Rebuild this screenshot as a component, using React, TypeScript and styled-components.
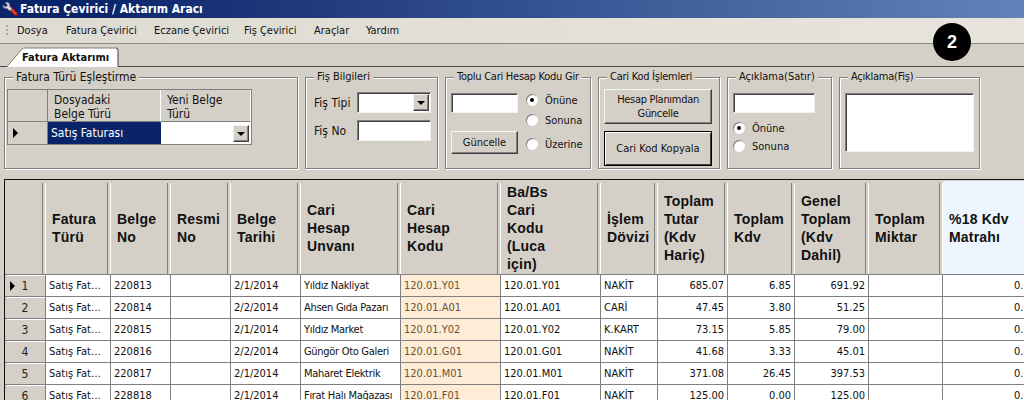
import React from "react";
import styled, { createGlobalStyle } from "styled-components";

const GlobalStyle = createGlobalStyle`
  html, body {
    margin: 0;
    padding: 0;
    width: 1024px;
    height: 400px;
    overflow: hidden;
    background: #d4d0c8;
  }
  * { box-sizing: border-box; }
`;

const UI_FONT = `"DejaVu Sans Condensed", "DejaVu Sans", sans-serif`;

const Page = styled.div`
  position: relative;
  width: 1024px;
  height: 400px;
  overflow: hidden;
  display: flex;
  flex-direction: column;
  background: #d4d0c8;
  color: #111;
  font-family: ${UI_FONT};
  font-stretch: condensed;
  font-size: 11px;
`;

const TitleBar = styled.div`
  height: 18px;
  flex: none;
  display: flex;
  align-items: center;
  gap: 2px;
  padding-left: 2px;
  background: linear-gradient(90deg, #0a246a 0%, #0a246a 8%, #6283b9 100%);
  color: #fff;
  font-size: 12px;
  font-weight: bold;
`;

const MenuBar = styled.div`
  height: 26px;
  flex: none;
  display: grid;
  grid-template-columns: 12px 49px 88px 90px 70px 52px 60px;
  align-items: center;
  padding-left: 5px;
  background: linear-gradient(90deg, #dedbd2 0%, #e6e4dd 100%);
  border-bottom: 1px solid #8a8a86;
`;

const Grip = styled.div`
  width: 2px;
  height: 11px;
  margin-left: 1px;
  background: repeating-linear-gradient(180deg, #a8a59c 0 2px, transparent 2px 4px);
`;

const MenuItem = styled.span`
  white-space: nowrap;
`;

const TabStrip = styled.div`
  height: 23px;
  flex: none;
  padding: 3px 0 0 7px;
  border-bottom: 1px solid #4a4a48;
`;

const Tab = styled.div`
  position: relative;
  width: 112px;
  height: 20px;
  display: flex;
  align-items: center;
  padding-left: 15px;
  font-weight: bold;
`;

const TabShape = styled.svg`
  position: absolute;
  left: 0;
  top: 0;
`;

const TabLabel = styled.span`
  position: relative;
`;

const GroupRow = styled.div`
  flex: none;
  display: flex;
  gap: 7px;
  padding: 10px 0 0 4px;
`;

const Group = styled.div<{ $w: number }>`
  position: relative;
  width: ${(p) => p.$w}px;
  height: 92px;
  flex: none;
  border: 1px solid #808080;
  box-shadow: inset 1px 1px 0 #fff, 1px 1px 0 #fff;
`;

const GroupTitle = styled.span<{ $large?: boolean; $tight?: boolean }>`
  position: absolute;
  left: 8px;
  top: -8px;
  padding: 0 3px;
  line-height: 14px;
  white-space: nowrap;
  background: #d4d0c8;
  font-size: ${(p) => (p.$large ? "12px" : "11px")};
  letter-spacing: ${(p) => (p.$tight ? "-0.25px" : "0")};
`;

const MiniGrid = styled.div`
  display: grid;
  grid-template-columns: 40px 113px 90px;
  grid-template-rows: 32px 22px;
  width: 245px;
  margin: 11px 0 0 2px;
  border: 1px solid #808080;
  font-size: 12px;
`;

const MiniHead = styled.div`
  padding: 3px 0 0 6px;
  line-height: 14px;
  border-right: 1px solid #fff;
  border-bottom: 1px solid #808080;
  white-space: pre-line;
`;

const MiniCorner = styled(MiniHead)`
  border-right: 1px solid #808080;
`;

const MiniArrow = styled.div`
  display: flex;
  align-items: center;
  padding-left: 5px;
  border-right: 1px solid #808080;
`;

const Arrow = styled.i`
  display: block;
  width: 0;
  height: 0;
  border-left: 5px solid #000;
  border-top: 5px solid transparent;
  border-bottom: 5px solid transparent;
`;

const SelectedCell = styled.div`
  display: flex;
  align-items: center;
  padding-left: 3px;
  background: #0a246a;
  color: #fff;
`;

const ComboCell = styled.div`
  display: flex;
  align-items: center;
  justify-content: flex-end;
  padding-right: 2px;
  background: #fff;
`;

const ComboButton = styled.div`
  position: relative;
  width: 16px;
  height: 17px;
  background: #d4d0c8;
  border: 1px solid;
  border-color: #f4f2ec #404040 #404040 #f4f2ec;
  box-shadow: inset -1px -1px 0 #808080;
  &::after {
    content: "";
    position: absolute;
    left: 3px;
    top: 6px;
    border-top: 4px solid #000;
    border-left: 4px solid transparent;
    border-right: 4px solid transparent;
  }
`;

const FisForm = styled.div`
  display: grid;
  grid-template-columns: 43px 74px;
  grid-auto-rows: 21px;
  row-gap: 7px;
  align-items: center;
  padding: 14px 0 0 8px;
  font-size: 12px;
`;

const Sunken = styled.div<{ $w?: number; $h?: number }>`
  width: ${(p) => (p.$w ? `${p.$w}px` : "100%")};
  height: ${(p) => (p.$h ? `${p.$h}px` : "100%")};
  flex: none;
  display: flex;
  align-items: center;
  justify-content: flex-end;
  padding-right: 1px;
  background: #fff;
  border: 1px solid;
  border-color: #808080 #f4f2ec #f4f2ec #808080;
  box-shadow: inset 1px 1px 0 #404040;
`;

const TopluBody = styled.div`
  display: flex;
  gap: 8px;
  padding: 15px 0 0 5px;
`;

const TopluLeft = styled.div`
  width: 67px;
  display: flex;
  flex-direction: column;
  gap: 18px;
`;

const Button = styled.div<{ $h: number; $default?: boolean; $tight?: boolean }>`
  height: ${(p) => p.$h}px;
  display: flex;
  align-items: center;
  justify-content: center;
  text-align: center;
  line-height: 14px;
  white-space: pre-line;
  letter-spacing: ${(p) => (p.$tight ? "-0.3px" : "0")};
  background: #d4d0c8;
  border: 1px solid;
  border-color: ${(p) => (p.$default ? "#000" : "#f4f2ec #404040 #404040 #f4f2ec")};
  box-shadow: ${(p) =>
    p.$default
      ? "inset 1px 1px 0 #fff, inset -1px -1px 0 #404040"
      : "inset -1px -1px 0 #808080"};
`;

const RadioColumn = styled.div<{ $gap?: number }>`
  display: flex;
  flex-direction: column;
  gap: ${(p) => p.$gap ?? 6}px;
`;

const RadioRow = styled.div<{ $push?: number }>`
  height: 14px;
  display: flex;
  align-items: center;
  gap: 7px;
  margin-top: ${(p) => p.$push ?? 0}px;
`;

const RadioDot = styled.span<{ $on?: boolean }>`
  position: relative;
  width: 12px;
  height: 12px;
  flex: none;
  border-radius: 50%;
  background: #fff;
  box-shadow: inset 1px 1px 0 #808080;
  &::after {
    content: "";
    display: ${(p) => (p.$on ? "block" : "none")};
    position: absolute;
    left: 4px;
    top: 4px;
    width: 4px;
    height: 4px;
    border-radius: 50%;
    background: #000;
  }
`;

const ButtonStack = styled.div`
  display: flex;
  flex-direction: column;
  gap: 7px;
  width: 108px;
  margin: 11px 0 0 5px;
`;

const AciklamaBody = styled.div`
  display: flex;
  flex-direction: column;
  gap: 8px;
  padding: 15px 0 0 5px;
`;

const DataGrid = styled.div`
  flex: none;
  margin: 10px 0 0 4px;
  height: 230px;
  border-top: 1px solid #111;
  border-left: 1px solid #111;
  overflow: hidden;
`;

const Table = styled.table`
  table-layout: fixed;
  width: 1035px;
  border-collapse: separate;
  border-spacing: 0;
  margin-top: 1px;
`;

const Col = styled.col<{ $w: number }>`
  width: ${(p) => p.$w}px;
`;

const HeadCell = styled.th<{ $blue?: boolean }>`
  position: relative;
  height: 94px;
  padding: 0 0 0 6px;
  text-align: left;
  vertical-align: middle;
  white-space: pre-line;
  font: bold 14px/18px "Liberation Sans", Arial, sans-serif;
  letter-spacing: 0.2px;
  color: #111;
  background: ${(p) => (p.$blue ? "#edf6ff" : "#d4d0c8")};
  border-bottom: 1px solid #808080;
  &::after {
    content: "";
    position: absolute;
    right: 0;
    top: 2px;
    bottom: 0;
    width: 2px;
    border-left: 1px solid #808080;
    border-right: 1px solid #fff;
  }
`;

const RowHead = styled.td`
  height: 22px;
  padding: 0;
  background: #d4d0c8;
  border-right: 1px solid #808080;
  border-bottom: 1px solid #808080;
  box-shadow: inset 2px 0 0 #d4d0c8, inset 0 1px 0 #fff;
`;

const RowHeadInner = styled.div`
  position: relative;
  text-align: center;
  font-size: 12px;
  color: #222;
`;

const RowArrow = styled(Arrow)`
  position: absolute;
  left: 5px;
  top: 2px;
`;

const Cell = styled.td<{ $num?: boolean; $code?: boolean; $tight?: boolean }>`
  height: 22px;
  padding: 0 3px;
  overflow: hidden;
  white-space: nowrap;
  text-align: ${(p) => (p.$num ? "right" : "left")};
  letter-spacing: ${(p) => (p.$tight ? "-0.3px" : "0")};
  background: ${(p) => (p.$code ? "#feecd7" : "#fff")};
  color: ${(p) => (p.$code ? "#6b5230" : "#111")};
  border-right: 1px solid #808080;
  border-bottom: 1px solid #808080;
`;

const Badge = styled.div`
  position: absolute;
  left: 933px;
  top: 23px;
  width: 38px;
  height: 38px;
  border-radius: 50%;
  display: flex;
  align-items: center;
  justify-content: center;
  background: #000;
  color: #fff;
  font: bold 18px "Liberation Sans", Arial, sans-serif;
`;

const widths = [41, 65, 60, 60, 70, 100, 100, 100, 57, 70, 67, 74, 74, 97];

const headers = [
  "",
  "Fatura\nTürü",
  "Belge\nNo",
  "Resmi\nNo",
  "Belge\nTarihi",
  "Cari\nHesap\nUnvanı",
  "Cari\nHesap\nKodu",
  "Ba/Bs\nCari\nKodu\n(Luca\niçin)",
  "İşlem\nDövizi",
  "Toplam\nTutar\n(Kdv\nHariç)",
  "Toplam\nKdv",
  "Genel\nToplam\n(Kdv\nDahil)",
  "Toplam\nMiktar",
  "%18 Kdv\nMatrahı",
];

const rows = [
  ["220813", "2/1/2014", "Yıldız Nakliyat", "120.01.Y01", "NAKİT", "685.07", "6.85", "691.92"],
  ["220814", "2/2/2014", "Ahsen Gıda Pazarı", "120.01.A01", "CARİ", "47.45", "3.80", "51.25"],
  ["220815", "2/1/2014", "Yıldız Market", "120.01.Y02", "K.KART", "73.15", "5.85", "79.00"],
  ["220816", "2/2/2014", "Güngör Oto Galeri", "120.01.G01", "NAKİT", "41.68", "3.33", "45.01"],
  ["220817", "2/1/2014", "Maharet Elektrik", "120.01.M01", "NAKİT", "371.08", "26.45", "397.53"],
  ["228818", "2/1/2014", "Fırat Halı Mağazası", "120.01.F01", "NAKİT", "125.00", "0.00", "125.00"],
];

const menus = ["Dosya", "Fatura Çevirici", "Eczane Çevirici", "Fiş Çevirici", "Araçlar", "Yardım"];

function ToolIcon() {
  return (
    <svg width="16" height="16" viewBox="0 0 16 16">
      <path d="M7 6 L14 13" stroke="#8c1a12" strokeWidth="4" strokeLinecap="round" />
      <path d="M7.5 6.5 L13.5 12.5" stroke="#e8483a" strokeWidth="2" strokeLinecap="round" />
      <path
        d="M1 4 L3.5 6 L5.5 4.5 L3.5 1.5 C6 0.5 8 2.5 7.5 5 L10 8 L8 10 L5 7.5 C2.5 8 0.5 6.5 1 4 Z"
        fill="#d8dce4"
        stroke="#6d7480"
        strokeWidth="0.7"
      />
    </svg>
  );
}

function Radio({ label, on, push }: { label: string; on?: boolean; push?: number }) {
  return (
    <RadioRow $push={push}>
      <RadioDot $on={on} />
      {label}
    </RadioRow>
  );
}

export default function App() {
  return (
    <Page>
      <GlobalStyle />
      <TitleBar>
        <ToolIcon />
        Fatura Çevirici / Aktarım Aracı
      </TitleBar>
      <MenuBar>
        <Grip />
        {menus.map((m) => (
          <MenuItem key={m}>{m}</MenuItem>
        ))}
      </MenuBar>
      <TabStrip>
        <Tab>
          <TabShape width="112" height="20" viewBox="0 0 112 20">
            <path d="M0 20 L15 2 Q16 1 18 1 L109 1 Q111 1 111 3 L111 20 Z" fill="#fff" />
            <path d="M0 19.5 L15 2 Q16 1 18 1 L109 1" fill="none" stroke="#808080" />
            <path d="M109 1 Q111 1 111 3 L111 20" fill="none" stroke="#404040" />
          </TabShape>
          <TabLabel>Fatura Aktarımı</TabLabel>
        </Tab>
      </TabStrip>
      <GroupRow>
        <Group $w={294}>
          <GroupTitle $large>Fatura Türü Eşleştirme</GroupTitle>
          <MiniGrid>
            <MiniCorner />
            <MiniHead>{"Dosyadaki\nBelge Türü"}</MiniHead>
            <MiniHead>{"Yeni Belge\nTürü"}</MiniHead>
            <MiniArrow>
              <Arrow />
            </MiniArrow>
            <SelectedCell>Satış Faturası</SelectedCell>
            <ComboCell>
              <ComboButton />
            </ComboCell>
          </MiniGrid>
        </Group>
        <Group $w={133}>
          <GroupTitle>Fiş Bilgileri</GroupTitle>
          <FisForm>
            <span>Fiş Tipi</span>
            <Sunken>
              <ComboButton />
            </Sunken>
            <span>Fiş No</span>
            <Sunken />
          </FisForm>
        </Group>
        <Group $w={146}>
          <GroupTitle $tight>Toplu Cari Hesap Kodu Gir</GroupTitle>
          <TopluBody>
            <TopluLeft>
              <Sunken $h={20} />
              <Button $h={23}>Güncelle</Button>
            </TopluLeft>
            <RadioColumn>
              <Radio label="Önüne" on />
              <Radio label="Sonuna" />
              <Radio label="Üzerine" push={4} />
            </RadioColumn>
          </TopluBody>
        </Group>
        <Group $w={122}>
          <GroupTitle $tight>Cari Kod İşlemleri</GroupTitle>
          <ButtonStack>
            <Button $h={35} $tight>{"Hesap Planımdan\nGüncelle"}</Button>
            <Button $h={35} $default>
              Cari Kod Kopyala
            </Button>
          </ButtonStack>
        </Group>
        <Group $w={105}>
          <GroupTitle>Açıklama(Satır)</GroupTitle>
          <AciklamaBody>
            <Sunken $w={82} $h={20} />
            <RadioColumn $gap={4}>
              <Radio label="Önüne" on />
              <Radio label="Sonuna" />
            </RadioColumn>
          </AciklamaBody>
        </Group>
        <Group $w={141}>
          <GroupTitle $tight>Açıklama(Fiş)</GroupTitle>
          <AciklamaBody>
            <Sunken $w={129} $h={59} />
          </AciklamaBody>
        </Group>
      </GroupRow>
      <DataGrid>
        <Table>
          <colgroup>
            {widths.map((w, i) => (
              <Col key={i} $w={w} />
            ))}
          </colgroup>
          <thead>
            <tr>
              {headers.map((h, i) => (
                <HeadCell key={i} $blue={i === 13}>
                  {h}
                </HeadCell>
              ))}
            </tr>
          </thead>
          <tbody>
            {rows.map((r, i) => (
              <tr key={r[0]}>
                <RowHead>
                  <RowHeadInner>
                    {i === 0 && <RowArrow />}
                    {i + 1}
                  </RowHeadInner>
                </RowHead>
                <Cell>Satış Fat…</Cell>
                <Cell>{r[0]}</Cell>
                <Cell />
                <Cell>{r[1]}</Cell>
                <Cell $tight>{r[2]}</Cell>
                <Cell $code>{r[3]}</Cell>
                <Cell>{r[3]}</Cell>
                <Cell>{r[4]}</Cell>
                <Cell $num>{r[5]}</Cell>
                <Cell $num>{r[6]}</Cell>
                <Cell $num>{r[7]}</Cell>
                <Cell />
                <Cell $num>0.00</Cell>
              </tr>
            ))}
          </tbody>
        </Table>
      </DataGrid>
      <Badge>2</Badge>
    </Page>
  );
}
